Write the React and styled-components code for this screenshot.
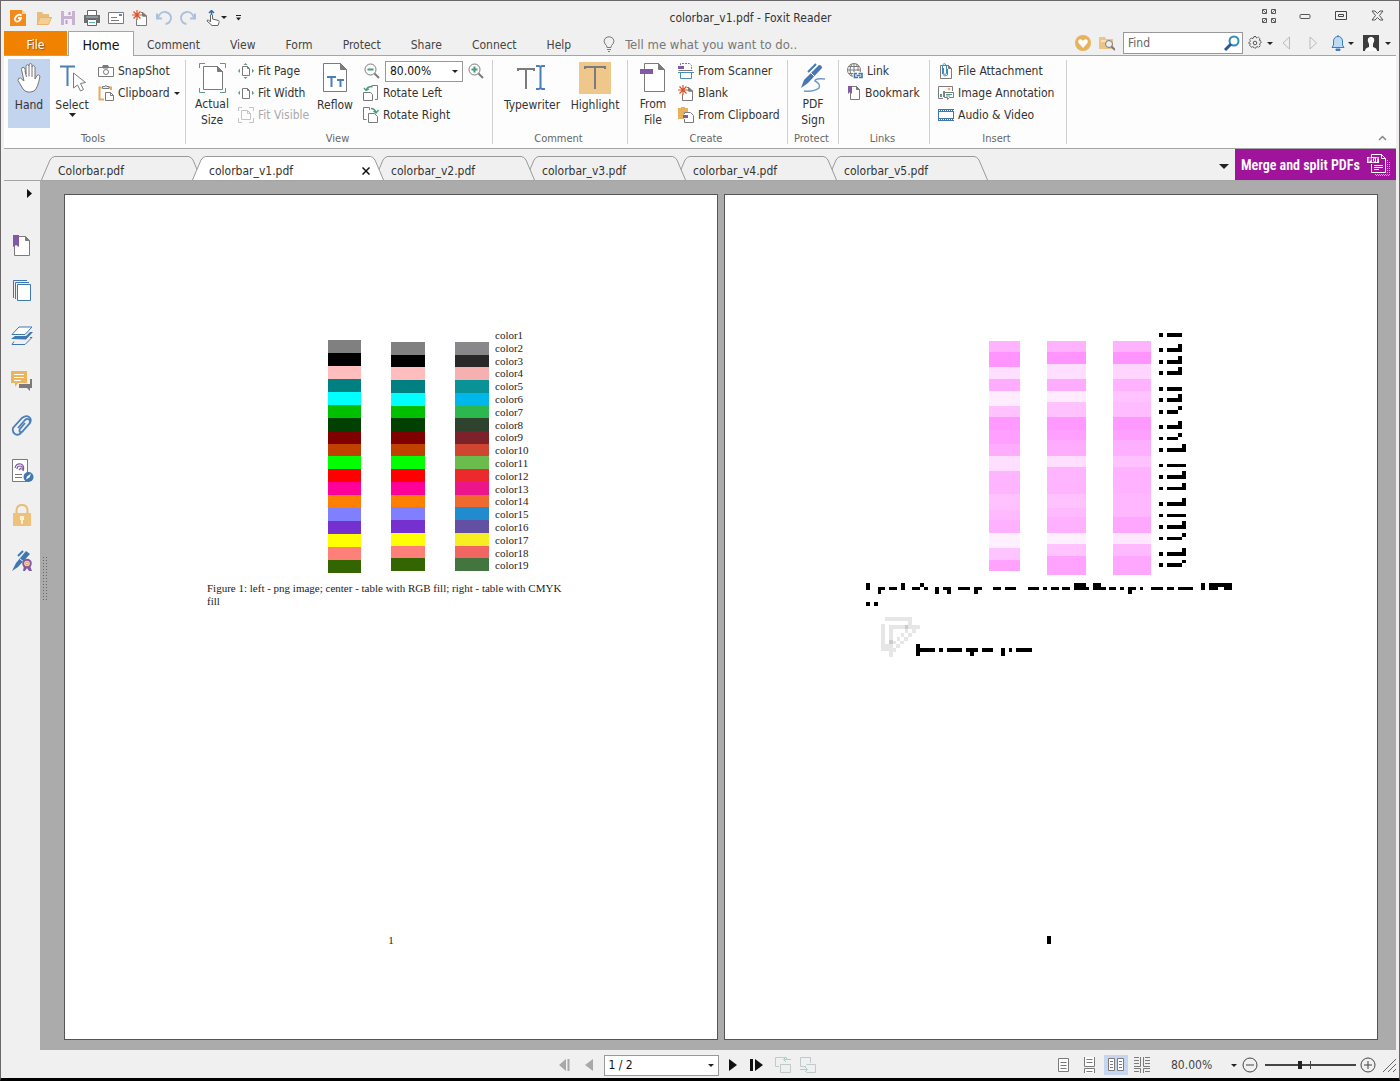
import React from "react";
import styled, {createGlobalStyle} from "styled-components";

const GlobalStyle = createGlobalStyle`
    *{
        box-sizing:border-box;
    }
    body{
        margin:0;
        background-color:#000;
        font-family:"DejaVu Sans Condensed", "DejaVu Sans", sans-serif;
        font-size:12px;
        color:#333;
    }
    button, input, select{
        font:inherit;
        color:inherit;
    }
    button{
        border:0;
        padding:0;
        background:none;
        white-space:nowrap;
    }
    svg{
        display:block;
        flex:none;
    }
`;

const Window = styled.div`
    height:100vh;
    min-height:700px;
    display:flex;
    flex-direction:column;
    background-color:#f0f0f0;
    border:1px solid #6b676b;
    border-bottom:3px solid #000;
`;

const Inner = styled.div`
    flex:1;
    min-height:0;
    margin:0 3px;
    display:flex;
    flex-direction:column;
`;

/* title bar */

const TitleBar = styled.header`
    height:30px;
    display:flex;
    align-items:center;
    padding:3px 10px 0 6px;
`;

const QuickAccess = styled.div`
    display:flex;
    gap:6px;
    align-items:center;
`;

const Logo = styled.span`
    margin-right:3px;
`;

const IconButton = styled.button`
    display:flex;
    align-items:center;
    justify-content:center;
    flex:none;
    width:${props=>props.$width || 18}px;
    height:${props=>props.$height || 20}px;
    background-color:${props=>props.$active ? "#c5d5ef" : "transparent"};
`;

const Title = styled.h1`
    flex:1;
    margin:0;
    font-size:12px;
    font-weight:normal;
    text-align:center;
`;

const WindowButtons = styled.div`
    display:flex;
    gap:18px;
    padding-bottom:4px;
`;

/* ribbon tabs */

const TabBar = styled.nav`
    display:flex;
    height:25px;
    border-bottom:1px solid #a5a5a5;
`;

const FileTab = styled.button`
    width:63px;
    height:24px;
    padding-top:3px;
    margin-right:1px;
    background-color:#f08200;
    color:#fff;
    text-shadow:1px 1px 1px #8a5a20;
`;

const HomeTab = styled.button`
    width:66px;
    height:25px;
    padding-top:2px;
    background-color:#fff;
    border:1px solid #a5a5a5;
    border-bottom:0;
    font-size:14px;
    color:#111;
`;

const RibbonTab = styled.button`
    padding:4px 0 0;
    margin-left:${props=>props.$first ? 13 : 30}px;
    color:#444;
`;

const TellMe = styled.label`
    display:flex;
    align-items:center;
    gap:10px;
    margin-left:32px;
    padding-top:2px;
`;

const TellMeInput = styled.input`
    width:190px;
    padding:0;
    border:0;
    background:none;
    font-size:13px;
    &::placeholder{
        color:#777;
        opacity:1;
    }
`;

const TabTools = styled.div`
    margin-left:auto;
    display:flex;
    align-items:center;
    height:24px;
`;

const FindBox = styled.label`
    display:flex;
    align-items:center;
    justify-content:space-between;
    width:120px;
    height:22px;
    margin:0 4px;
    padding:0 2px 0 4px;
    background-color:#fff;
    border:1px solid #999;
`;

const FindInput = styled.input`
    width:80px;
    padding:0;
    border:0;
    background:none;
    &::placeholder{
        color:#666;
        opacity:1;
    }
`;

/* ribbon */

const Ribbon = styled.div`
    display:flex;
    height:93px;
    background-color:#fdfdfd;
    border-bottom:1px solid #a5a5a5;
`;

const Group = styled.section`
    display:flex;
    flex-direction:column;
    width:${props=>props.$width}px;
    padding:3px 4px 0;
    background:linear-gradient(#d0d0d0, #d0d0d0) right 4px / 1px 84px no-repeat;
`;

const GroupBody = styled.div`
    display:flex;
    gap:${props=>props.$gap || 1}px;
    height:72px;
`;

const GroupTitle = styled.div`
    padding-right:4px;
    font-size:11px;
    line-height:16px;
    text-align:center;
    color:#666;
`;

const BigButton = styled.button`
    display:flex;
    flex-direction:column;
    align-items:center;
    width:${props=>props.$width || 42}px;
    height:69px;
    line-height:16px;
    background-color:${props=>props.$active ? "#c3d4ef" : "transparent"};
`;

const BigIcon = styled.span`
    display:flex;
    align-items:center;
    height:38px;
`;

const BigLabel = styled.span`
    white-space:pre-line;
`;

const Stack = styled.div`
    display:flex;
    flex-direction:column;
    align-items:flex-start;
    padding-top:1px;
    padding-left:${props=>props.$pad || 0}px;
    width:${props=>props.$width || "auto"};
`;

const SmallButton = styled.button`
    display:flex;
    align-items:center;
    gap:4px;
    height:22px;
    &:disabled{
        color:#aaa;
    }
`;

const ZoomRow = styled.div`
    display:flex;
    align-items:center;
    height:22px;
    gap:5px;
`;

const SelectBox = styled.div`
    display:grid;
    align-items:center;
    width:${props=>props.$width}px;
    height:21px;
    background-color:#fff;
    border:1px solid #999;
    > *{
        grid-area:1 / 1;
    }
    > svg{
        justify-self:end;
        margin-right:4px;
        pointer-events:none;
    }
`;

const Select = styled.select`
    appearance:none;
    width:100%;
    height:19px;
    padding:0 4px;
    border:0;
    background:none;
    color:#111;
`;

const Collapse = styled.button`
    margin:auto 9px 3px auto;
    padding:4px 0;
`;

/* document tabs */

const DocTabs = styled.div`
    display:flex;
    align-items:flex-end;
    height:32px;
    padding-left:37px;
    border-bottom:1px solid #a5a5a5;
`;

const DocTabBox = styled.div`
    position:relative;
    z-index:${props=>props.$level};
    display:flex;
    width:${props=>props.$active ? 192 : 161}px;
    height:24px;
    margin-right:-10px;
`;

const DocTabBody = styled.div`
    flex:1;
    display:flex;
    align-items:center;
    justify-content:space-between;
    padding:5px 0 0 3px;
    background-color:${props=>props.$active ? "#fff" : "#f0f0f0"};
    border-top:1px solid #999;
`;

const Promo = styled.a`
    display:flex;
    align-items:center;
    justify-content:space-between;
    align-self:flex-start;
    width:161px;
    height:31px;
    padding:0 6px;
    background-color:#a0149c;
    color:#fff;
    font-family:"Roboto Condensed", "Roboto", sans-serif;
    font-size:14px;
    font-weight:600;
    white-space:nowrap;
    text-decoration:none;
`;

const TabListButton = styled.button`
    align-self:flex-start;
    margin:15px 6px 0 auto;
`;

/* work area */

const Work = styled.main`
    flex:1;
    min-height:0;
    display:flex;
    background-color:#ababab;
`;

const Sidebar = styled.aside`
    width:36px;
    display:flex;
    flex-direction:column;
    align-items:center;
    background-color:#f0f0f0;
`;

const Expand = styled.button`
    align-self:flex-end;
    margin:8px 8px 25px 0;
`;

const SideButton = styled.button`
    display:flex;
    align-items:center;
    justify-content:center;
    width:36px;
    height:45px;
`;

const Gutter = styled.div`
    width:24px;
    padding:375px 0 0 2px;
`;

const Grip = styled.div`
    width:5px;
    height:44px;
    background:radial-gradient(#666 30%, transparent 40%) 0 0 / 3px 3px;
`;

const Pages = styled.div`
    flex:1;
    display:grid;
    grid-template-columns:1fr 1fr;
    gap:6px;
    padding:13px 18px 10px 0;
`;

const Page = styled.article`
    display:flex;
    flex-direction:column;
    align-items:center;
    background-color:#fff;
    border:1px solid #555;
    padding:${props=>props.$preview ? "135px 4px 0 0" : "134px 0 0"};
    color:#222;
    font-family:"Liberation Serif", serif;
    font-size:11px;
    line-height:13px;
`;

const Figure = styled.figure`
    width:368px;
    margin:0;
`;

const Chart = styled.div`
    display:flex;
    gap:30px;
    height:243px;
    padding-left:121px;
`;

const Bar = styled.div`
    display:flex;
    flex-direction:column;
    width:${props=>props.$tall ? 33 : 34}px;
    height:${props=>props.$tall ? 233 : 229}px;
    margin-top:${props=>props.$tall ? 11 : 13}px;
`;

const Swatch = styled.div`
    flex:1;
    background-color:${props=>props.$color};
`;

const Names = styled.ol`
    list-style:none;
    display:flex;
    flex-direction:column;
    height:243px;
    margin:0 0 0 -24px;
    padding:0;
`;

const Name = styled.li`
    flex:1;
    min-height:0;
    line-height:12px;
`;

const Caption = styled.figcaption`
    margin-top:10px;
`;

const PageNumber = styled.div`
    margin-top:${props=>props.$preview ? 279 : 326}px;
`;

/* status bar */

const StatusBar = styled.footer`
    display:grid;
    grid-template-columns:1fr auto 1fr;
    align-items:center;
    height:28px;
    padding-top:2px;
`;

const PageNav = styled.div`
    grid-column:2;
    display:flex;
    align-items:center;
    gap:7px;
    padding-right:28px;
`;

const ViewTools = styled.div`
    display:flex;
    align-items:center;
    justify-content:flex-end;
    gap:2px;
`;

const ZoomButton = styled.button`
    display:flex;
    align-items:center;
    justify-content:space-between;
    width:66px;
    margin:0 2px 0 15px;
    color:#444;
`;

const Slider = styled.input`
    appearance:none;
    width:91px;
    height:12px;
    margin:0 1px 0 4px;
    background:
        linear-gradient(#444, #444) 45px 2px / 1px 8px no-repeat,
        linear-gradient(#444, #444) 0 5px / 100% 2px no-repeat;
    &::-webkit-slider-thumb{
        appearance:none;
        width:4px;
        height:8px;
        background-color:#222;
    }
`;

const Corner = styled.span`
    margin-left:4px;
`;

const Caret = ({size = 7})=>
    <svg width={size} height={Math.ceil(size / 2)} viewBox="0 0 8 4" preserveAspectRatio="none">
        <path d="M0 0h8L4 4z" fill="#222"/>
    </svg>

const Drawing = ({size = 16, width, height, children})=>
    <svg width={width || size} height={height || size} viewBox={`0 0 ${width || size} ${height || size}`} fill="none" stroke="#7b7b7b">
        {children}
    </svg>

const star = "M5 0v10M0 5h10M1.5 1.5l7 7M8.5 1.5l-7 7";

const icons = {
    logo:<Drawing><path d="M0 0h12l4 4v12H0z" fill="#f28a1c" stroke="none"/><path d="M12 0v4h4z" fill="#fbd3a0" stroke="none"/><path d="M11.500 5.500Q10 4 7.500 5.200Q4.500 7 5 10Q6 12.500 9 11Q10.500 10 11 8H8" stroke="#fff" strokeWidth="1.800"/></Drawing>,
    open:<Drawing><path d="M1 15V2h5l1 2h6v4" fill="#e7bd79" stroke="none"/><path d="M1 14.500L4 7.500h11.500l-3 7z" fill="#f3cf94" stroke="#e4b66c"/></Drawing>,
    save:<Drawing size={14}><path d="M0 0h14v14H0z" fill="#c5b3d0" stroke="none"/><path d="M3 0h8v5H3zM3 8h8v6H3z" fill="#f3edf5" stroke="none"/><path d="M8.500 1v3M5.500 9v4" stroke="#b59fc4" strokeWidth="2"/></Drawing>,
    print:<Drawing><path d="M3.500 5V.5h9V5" fill="#fff" stroke="#666"/><path d="M0 5h16v8h-3V9H3v4H0z" fill="#6e6e6e" stroke="none"/><path d="M2 7h12" stroke="#a9c8dc"/><path d="M3.500 9.500h9v6h-9z" fill="#fff" stroke="#666"/><path d="M5 12.500h6" stroke="#5ba"/></Drawing>,
    mail:<Drawing height={12} width={16}><path d="M.5.5h15v11H.5z" fill="#fff"/><path d="M3 5.500h6M3 8.500h8"/><path d="M11 2h3v2h-3z" fill="#5b87b5" stroke="none"/></Drawing>,
    blank:<Drawing><path d="M4.500 9.500v6h10V6l-4-3.500H9M10.500 2.500V6h4" fill="#fff"/><path d="M10.500 2.500V6h4z" fill="#7b7b7b"/><path d={star} stroke="#d9532c" strokeWidth="1.200"/></Drawing>,
    undo:<Drawing><path d="M1 3.500v5h5" stroke="#a9c1da" strokeWidth="2"/><path d="M2 8Q4 1.500 9.500 2Q15 3 15 8.500Q14 13.500 9.500 14" stroke="#a9c1da" strokeWidth="1.800"/></Drawing>,
    redo:<Drawing><path d="M15 3.500v5h-5" stroke="#a9c1da" strokeWidth="2"/><path d="M14 8Q12 1.500 6.500 2Q1 3 1 8.500Q2 13.500 6.500 14" stroke="#a9c1da" strokeWidth="1.800"/></Drawing>,
    touch:<Drawing><path d="M5.500 12V5q1-1.500 2 0v4l6 1.500q1 .5.5 2l-1 3h-6L2 11q0-1.500 1.500-1z" fill="#fff" stroke="#666"/><path d="M6.500 5V1M4 3l2.500-2.500L9 3" stroke="#336fa8" strokeWidth="1.500"/></Drawing>,
    more:<Drawing width={5} height={6}><path d="M0 .5h5" stroke="#222"/><path d="M0 2.500h5L2.500 5.500z" fill="#222" stroke="none"/></Drawing>,
    full:<Drawing size={14}><path d="M.5.5h4v4h-4zM9.500.5h4v4h-4zM.5 9.500h4v4h-4zM9.500 9.500h4v4h-4z" stroke="#555"/><path d="M1 1l3.500 3.500M13 1L9.500 4.500M1 13l3.500-3.500M13 13L9.500 9.500" stroke="#777"/></Drawing>,
    min:<Drawing width={12} height={10}><rect x="1" y="3.500" width="10" height="4" rx="1" stroke="#555"/></Drawing>,
    max:<Drawing width={12} height={10}><path d="M.5.5h11v8H.5z" stroke="#444"/><path d="M3.500 3.500h5v2h-5z" stroke="#444"/></Drawing>,
    close:<Drawing width={13} height={11}><path d="M1 1h3l2.500 2.500L9 1h3L8.500 5.500 12 10H9L6.500 7.500 4 10H1l3.500-4.500z" stroke="#555"/></Drawing>,
    bulb:<Drawing width={12} height={16}><path d="M4 11.500Q4 9 2 8Q0 5 2 2.500Q6-1 10 2.500Q12 5 10 8Q8 9 8 11.500zM4 13.500h4M5 15.500h2"/></Drawing>,
    heart:<Drawing><circle cx="8" cy="8" r="8" fill="#e8b25a" stroke="none"/><path d="M8 13L3.500 8Q2.500 5 5 4.200Q7 4 8 6Q9 4 11 4.200Q13.500 5 12.500 8z" fill="#fff" stroke="none"/></Drawing>,
    folderFind:<Drawing><path d="M0 2h6l1 2h7v10H0z" fill="#edc487" stroke="none"/><path d="M2 6h5" stroke="#fff"/><circle cx="10" cy="9" r="3.500" fill="#eee"/><path d="M12.500 11.500L16 15" strokeWidth="2"/></Drawing>,
    find:<Drawing><circle cx="10" cy="6" r="4.500" stroke="#318bb8" strokeWidth="2"/><path d="M7 9l-6 6" stroke="#2b55a0" strokeWidth="3"/></Drawing>,
    gear:<Drawing><path d="M7 1.500h2l.5 1.500 2-.8 1.500 1.400-.8 1.900 1.800.5v2l-1.500.8.7 2-1.400 1.400-2-.7-.8 1.500H7l-.8-1.500-2 .7-1.400-1.400.7-2L2 9V7l1.500-.7-.8-1.900 1.500-1.400 2 .7z" stroke="#555" strokeDasharray="2 .5"/><circle cx="8" cy="8" r="1.800" stroke="#555"/></Drawing>,
    prev:<Drawing width={9} height={14}><path d="M7.500 1v12L1 7z" stroke="#bbb"/></Drawing>,
    next:<Drawing width={9} height={14}><path d="M1 1v12l6.500-6z" stroke="#bbb"/></Drawing>,
    bell:<Drawing width={14} height={16}><path d="M1 12.500L2.500 10V6Q3 1.500 7 1.500T11.500 6v4l1.500 2.500z" fill="#bcdcf5" stroke="#3f7dbb"/><path d="M5 14h4v1.500H5zM7 0v2" fill="#3f7dbb" stroke="#3f7dbb"/></Drawing>,
    user:<Drawing><path d="M0 0h16v16H0z" fill="#3d3d3d" stroke="none"/><path d="M2 16q0-3 4-4V9Q4 6 5 3.500Q8 0 11 3.500Q12 6 10 9v3q4 1 4 4z" fill="#fff" stroke="none"/></Drawing>,
    hand:<Drawing width={24} height={30}><path d="M7 18L4.500 6.500q0-2 1.500-2.200T8 6l1 5V3.500q.2-1.800 1.500-1.800T12 3V2q.3-1.500 1.500-1.500T15 2v2q.2-1.300 1.500-1.300T18 4.500V16l2-3.500q1.500-1.500 3 .5Q21 25 17 28q-7 3-11-2L1 17.500q0-3 2.500-2.500L7 18z" fill="#fff" stroke="#777"/><path d="M8 8l1.500 6M12 3v10.500M15 4v10" stroke="#777"/></Drawing>,
    select:<Drawing width={28} height={30}><path d="M2 3.500h15M9.500 3v20" stroke="#4b7fb5" strokeWidth="2"/><path d="M15.500 10v15l4-3 3 6 3-1.500-3-6 5-1z" fill="#fff"/></Drawing>,
    camera:<Drawing width={16} height={12}><path d="M.5 2.500H5V.5h5v2h5.500v9H.5z" fill="#fff"/><path d="M5 1h5v2H5z" fill="#7b7b7b"/><circle cx="8" cy="7" r="2.500"/></Drawing>,
    clipboard:<Drawing><path d="M6 14.500H1.500v-12h2M11 2.500h2V5" stroke="#e8a95b" strokeWidth="2"/><path d="M4.500 3.500v-2H7q0-2 2 0h2v2z" fill="#eee"/><path d="M7.500 7.500h5l3 3v5h-8zM12.500 7.500v3h3" fill="#fff"/></Drawing>,
    actual:<Drawing width={27} height={30}><path d="M.5 5V.5H6M21 .5h5.500V5M.5 25v4.500H6M21 29.500h5.500V25" stroke="#5a9c85"/><path d="M4.500 3.500h14l5 5v18h-19z" fill="#fff"/><path d="M18.500 3.500v5h5z" fill="#7b7b7b"/></Drawing>,
    fitPage:<Drawing><path d="M4.500 3.500h5l2 2v7h-7zM9.500 3.500v2h2" fill="#fff"/><path d="M5.500 2L7.500 0l2 2zM5.500 14l2 2 2-2zM2 5.500L0 8l2 2zM14 5.500L16 8l-2 2z" fill="#5a9c85" stroke="none"/></Drawing>,
    fitWidth:<Drawing><path d="M4.500 3.500h5l2 2v8h-7zM9.500 3.500v2h2" fill="#fff"/><path d="M2 5.500L0 8l2 2zM14 5.500L16 8l-2 2z" fill="#5a9c85" stroke="none"/></Drawing>,
    fitVisible:<Drawing><path d="M.5 4V.5H4M11 .5h4.500V4M.5 11v4.500H4M11 15.500h4.500V11M3.500 3.500h6l3 3v6h-9zM9.500 3.500v3h3" stroke="#c4c4c4"/></Drawing>,
    reflow:<Drawing width={24} height={30}><path d="M.5.5h17l6 6v22H.5z" fill="#fff"/><path d="M17.500.5v6h6z" fill="#7b7b7b"/><path d="M4 14h9M8.500 14v10M14 17h7M17.500 17v7" stroke="#4b7fb5" strokeWidth="2"/></Drawing>,
    zoomOut:<Drawing><circle cx="6.500" cy="6.500" r="5.500"/><path d="M10.500 10.500L15 15" strokeWidth="2"/><path d="M3.500 6.500h6" stroke="#4c9b80" strokeWidth="2"/></Drawing>,
    zoomIn:<Drawing><circle cx="6.500" cy="6.500" r="5.500"/><path d="M10.500 10.500L15 15" strokeWidth="2"/><path d="M3.500 6.500h6M6.500 3.500v6" stroke="#4c9b80" strokeWidth="2"/></Drawing>,
    rotateLeft:<Drawing><path d="M9 2.500V.5h5.500v14H12M.5 7.500h7l2 2v6h-9z" fill="#fff"/><path d="M3 5.500Q4 1.500 9 1.500M1 3l2 2.500L6 4" stroke="#4c9b80" strokeWidth="1.300"/></Drawing>,
    rotateRight:<Drawing><path d="M3.500 12.500h-3v-12h6V3M5.500 6.500h6l3 3v6h-9z" fill="#fff"/><path d="M8 1.500Q12 1.500 13 6M10.500 4L13 6l2.500-3" stroke="#4c9b80" strokeWidth="1.300"/></Drawing>,
    typewriter:<Drawing width={30} height={28}><path d="M1 7V5h16v2M9 5v20" strokeWidth="2"/><path d="M19 2h3l1.500 1L25 2h3M23.500 2v23M19 25h3l1.500-1 1.500 1h3" stroke="#4b7fb5" strokeWidth="2"/></Drawing>,
    highlight:<Drawing width={32} height={32}><path d="M0 0h32v32H0z" fill="#efc78a" stroke="none"/><path d="M6 7V5h20v2M16 5v22" strokeWidth="2"/></Drawing>,
    fromFile:<Drawing width={26} height={30}><path d="M4.500.5h14l6 6v22h-20z" fill="#fff"/><path d="M18.500.5v6h6z" fill="#7b7b7b"/><path d="M0 6h13v5H0z" fill="#8358a4" stroke="none"/></Drawing>,
    scanner:<Drawing><path d="M2.500 2V.5h9l2 2V6" strokeDasharray="2 1"/><path d="M0 3h6v3H0z" fill="#8358a4" stroke="none"/><path d="M.5 7.500h14"/><path d="M2.500 10v5.500h11V10M0 9.500h16" stroke="#4b8fb0"/></Drawing>,
    fromClipboard:<Drawing><path d="M0 1h3V0h4v1h3v4H6v7H0z" fill="#e8b25a" stroke="none"/><path d="M6.500 7V5.500h6l3 3v7h-9V12" fill="#fff"/><path d="M5 8h5v3H5z" fill="#8358a4" stroke="none"/></Drawing>,
    sign:<Drawing width={26} height={30}><path d="M19 2q3 0 3 3L8 20l-7 5 3-8z" fill="#4478ae" stroke="none"/><path d="M8 9l8-8" stroke="#4478ae" strokeWidth="2"/><path d="M11 10l4 4" stroke="#fff"/><path d="M25 16Q15 15 15 18Q21 21 19 25Q14 29 4 28" stroke="#6b9bc7" strokeWidth="1.500"/></Drawing>,
    link:<Drawing><circle cx="7" cy="7" r="6.500"/><path d="M.5 7h13M7 .5v13M2 3.500h10M2 10.500h6M5 1Q1 7 5 13M9 1q3 3 2 7"/><path d="M6 9h10v7H6z" fill="#fdfdfd" stroke="none"/><path d="M10 10.500H7.500v4H11M12 14.500h3v-4H11.500M9.500 12.500h4" stroke="#3f78b0" strokeWidth="1.600"/></Drawing>,
    bookmark:<Drawing width={14} height={16}><path d="M3.500 1.500h6l3 3v10h-9z" fill="#fff"/><path d="M9.500 1.500v3h3z" fill="#7b7b7b"/><path d="M1 1h4v8L3 7 1 9z" fill="#8358a4" stroke="none"/></Drawing>,
    attach:<Drawing><path d="M2.500 2.500h8l3 3v10h-11z" fill="#fff"/><path d="M10.500 2.500v3h3z" fill="#7b7b7b"/><path d="M5.500 5v5.500q1.500 2 3 0V3Q7-1 4.500 2v9q2 3.500 5 1V6" stroke="#3f88c0"/></Drawing>,
    image:<Drawing><path d="M5 13.500H.5v-12h14V6"/><path d="M2 12V9h2v3zM5 12V6h2v6z" fill="#5a9c85" stroke="none"/><circle cx="11" cy="4" r="1.300" fill="#e8b25a" stroke="none"/><path d="M6.500 7.500h9v5h-4l-2 2v-2h-3z" fill="#fff"/><path d="M8 9.500h6M8 11h4" stroke="#5a9c85"/></Drawing>,
    video:<Drawing><path d="M.5 2.500h15v11H.5z" fill="#fff" stroke="#3f78b0"/><path d="M0 3.500h16M0 12.500h16" stroke="#3f78b0" strokeWidth="3"/><path d="M1 3.500h15M1 12.500h15" stroke="#fff" strokeDasharray="1 1"/></Drawing>,
    up:<Drawing width={9} height={6}><path d="M1 5l3.500-3.500L8 5" stroke="#888" strokeWidth="1.500"/></Drawing>,
    cross:<Drawing size={8}><path d="M.5.5l7 7M7.500.5l-7 7" stroke="#111" strokeWidth="1.500"/></Drawing>,
    pdfs:<Drawing width={23} height={22}><path d="M4.500 4V.5h10l4 4v14h-14V10M14.500.5v4h4" stroke="#fff"/><path d="M0 3h12v6H0z" fill="#fff" stroke="none"/><path d="M2 8V4h2v2H2M5.500 4v4h1l1-1V5l-1-1M9.500 8V4h2M9.500 6h1" stroke="#a0149c"/><path d="M7 11.500h9M7 13.500h9M7 15.500h5" stroke="#fff"/><path d="M20.500 6v14.500H7M22.500 8v13.500H9" stroke="#df9edd" strokeDasharray="1 1"/></Drawing>,
    right:<Drawing width={5} height={9}><path d="M0 0l5 4.500L0 9z" fill="#111" stroke="none"/></Drawing>,
    sideBookmark:<Drawing width={18} height={22}><path d="M1.500 1.500h11l4 4v15h-15z" fill="#fff"/><path d="M12.500 1.500v4h4z" fill="#7b7b7b"/><path d="M0 0h6v12l-3-2-3 2z" fill="#8358a4" stroke="none"/></Drawing>,
    pages:<Drawing width={20} height={22}><path d="M1.500 18V.5H15M3.500 19V2.500H17" stroke="#3f78b0"/><path d="M5.500 4.500h13v16h-13z" fill="#fff" stroke="#3f78b0"/></Drawing>,
    layers:<Drawing width={22} height={20}><path d="M1 8.500L8 1h13l-7 7.500z" fill="#fff" stroke="#3f78b0"/><path d="M0 13l4-3h11l4-4h3l-7 7.500z" fill="#3f78b0" stroke="none"/><path d="M3 15.500L1 18.500h13l7-7h-2" stroke="#3f78b0"/></Drawing>,
    comments:<Drawing width={22} height={20}><path d="M19 8h2v9h-2v3l-3-3H8v-4h11z" fill="#7b7b7b" stroke="none"/><path d="M0 0h16v12H7l-3 4v-4H0z" fill="#eeb45c" stroke="none"/><path d="M3 3.500h10M3 6.500h10M3 9.500h7" stroke="#fff"/></Drawing>,
    clip:<Drawing size={22}><path d="M7 13l7-8q2-2 4-.5T18 9l-8 9q-3 3-6 1t-2-6l9-10q4-3 7-1t1 6l-7 8q-2 2-3 1t0-3l5-6" stroke="#4a80bb" strokeWidth="1.800"/></Drawing>,
    signDoc:<Drawing width={23} height={24}><path d="M1.500.5h15v22h-15z" fill="#fff"/><path d="M4 9Q5 4 10 5q4 2 2 7M6 10q0-3 3-3t2 4M8 11l2-2" stroke="#8358a4" strokeWidth="1.200"/><path d="M4 15.500h7M4 18.500h7"/><circle cx="17.500" cy="18" r="5" fill="#3f78b0" stroke="none"/><path d="M15 20.500l1-3 4-3-1.500 4z" fill="#fff" stroke="none"/></Drawing>,
    lock:<Drawing width={20} height={23}><path d="M4.500 10V6Q5 1 10 1t5.500 5v4" stroke="#e8bd75" strokeWidth="2"/><path d="M1 9h18v13H1z" fill="#eec27a" stroke="none"/><path d="M8 12h4v4h-1v4H9v-4H8z" fill="#fbf0dd" stroke="none"/></Drawing>,
    certify:<Drawing size={22}><path d="M15 1l4 3L7 17l-6 4 4-8z" fill="#3f78b0" stroke="none"/><path d="M7 6l5-5" stroke="#3f78b0" strokeWidth="2"/><path d="M9 9l4 3" stroke="#f0f0f0"/><path d="M13 16l-1 5h2l2-3 2 3h3l-2-5z" fill="#8358a4" stroke="none"/><circle cx="16" cy="13.500" r="3.800" fill="#fbe3c0" stroke="#8358a4" strokeWidth="2"/><circle cx="16" cy="13.500" r="1.500" stroke="#e39b45"/></Drawing>,
    first:<Drawing width={14} height={12}><path d="M8 0v12L1 6zM9.500 0h2v12h-2z" fill="#a8a8a8" stroke="none"/></Drawing>,
    back:<Drawing width={8} height={12}><path d="M8 0v12L0 6z" fill="#a8a8a8" stroke="none"/></Drawing>,
    forward:<Drawing width={8} height={12}><path d="M0 0v12l8-6z" fill="#111" stroke="none"/></Drawing>,
    last:<Drawing width={13} height={12}><path d="M0 0h3v12H0zM5 0v12l8-6z" fill="#111" stroke="none"/></Drawing>,
    prevView:<Drawing><path d="M4 9.500H.5v-9h11V3M5.500 7.500h10v8h-10z" stroke="#bfcac9"/><path d="M16 2.500H9M11 0L8.500 2.500 11 5" stroke="#a6cfc8"/></Drawing>,
    nextView:<Drawing><path d="M6 9.500H.5v-9h10V6M6.500 7.500h9v8h-9" stroke="#bfcac9"/><path d="M0 12.500h7M5 10l2.500 2.500L5 15" stroke="#a6cfc8"/></Drawing>,
    single:<Drawing width={12} height={15}><path d="M.5.5h10v13H.5z" fill="#fff"/><path d="M2.500 4.500h6M2.500 7.500h6M2.500 10.500h6"/></Drawing>,
    scroll:<Drawing width={12} height={16}><path d="M.5 0v9.500h10V0M.5 16v-4.500h10V16" fill="#fff"/><path d="M2.500 2.500h6M2.500 5.500h6M2.500 14.500h6"/></Drawing>,
    facing:<Drawing width={16} height={14}><path d="M.5.5h6v12h-6zM9.500.5h6v12h-6z" fill="#fff"/><path d="M2 3.500h3M2 6.500h3M2 9.500h3M11 3.500h3M11 6.500h3M11 9.500h3"/></Drawing>,
    facingScroll:<Drawing><path d="M6.500 0v9.500H0M9.500 0v9.500H16M6.500 16v-4.500H0M9.500 16v-4.500H16"/><path d="M0 .5h5M0 3.500h5M0 6.500h5M11 .5h5M11 3.500h5M11 6.500h5M0 14.500h5M11 14.500h5"/></Drawing>,
    minus:<Drawing><circle cx="8" cy="8" r="7" stroke="#444"/><path d="M4 8h8" stroke="#444"/></Drawing>,
    plus:<Drawing><circle cx="8" cy="8" r="7" stroke="#444"/><path d="M4 8h8M8 4v8" stroke="#444"/></Drawing>,
    resize:<Drawing size={13}><path d="M0 13L13 0M5 13l8-8M10 13l3-3" stroke="#666"/></Drawing>
};

const quick = ["open", "save", "print", "mail", "blank", "undo", "redo"];

const menu = ["Comment", "View", "Form", "Protect", "Share", "Connect", "Help"];

const docs = ["Colorbar.pdf", "colorbar_v1.pdf", "colorbar_v2.pdf", "colorbar_v3.pdf", "colorbar_v4.pdf", "colorbar_v5.pdf"];

const side = [
    ["sideBookmark", "Bookmarks"],
    ["pages", "Page thumbnails"],
    ["layers", "Layers"],
    ["comments", "Comments"],
    ["clip", "Attachments"],
    ["signDoc", "Signatures"],
    ["lock", "Security"],
    ["certify", "Digital signatures"]
];

const rgb = ["#808080", "#000", "#ffbdbd", "#008080", "#00ffff", "#00c000", "#004000", "#800000", "#c04000", "#00ff00", "#ff0000", "#ff0099", "#ff8000", "#8080ff", "#7730d0", "#ffff00", "#ff8078", "#336600"];

const cmyk = ["#88888a", "#282828", "#f7b0b0", "#0a9396", "#00b7eb", "#2db84f", "#2d432d", "#7d212b", "#d04530", "#6abd4c", "#ec2a2d", "#ec1589", "#f06a30", "#208ccf", "#6350a2", "#f6ee20", "#f16662", "#43753f"];

// coarse preview bars: left, width, then [bottom edge, color] from top to bottom
const previewBars = [
    [417, 93, [[96, "#ffb3ff"], [141, "#ff94ff"], [177, "#ffdeff"], [213, "#ffabff"], [258, "#ffecff"], [291, "#ffc2ff"], [330, "#ff98ff"], [372, "#ff9fff"], [408, "#ffacff"], [453, "#ffdeff"], [522, "#ffb4ff"], [570, "#ffc2ff"], [600, "#ffbaff"], [639, "#ffb0ff"], [684, "#fff0ff"], [720, "#ffc4ff"], [753, "#ffa3ff"]]],
    [591, 117, [[96, "#ffb3ff"], [132, "#ff94ff"], [177, "#ffdeff"], [213, "#ffabff"], [246, "#ffecff"], [291, "#ffc2ff"], [330, "#ff98ff"], [360, "#ff9fff"], [408, "#ffacff"], [441, "#ffdeff"], [522, "#ffb4ff"], [564, "#ffc2ff"], [591, "#ffbaff"], [639, "#ffb0ff"], [672, "#fff0ff"], [708, "#ffc4ff"], [765, "#ffa3ff"]]],
    [789, 114, [[96, "#ffb3ff"], [132, "#ff94ff"], [177, "#ffd4ff"], [213, "#ffb3ff"], [246, "#ffc4ff"], [291, "#ffbcff"], [330, "#ff98ff"], [360, "#ff9fff"], [408, "#ffafff"], [441, "#ffc2ff"], [519, "#ffb2ff"], [591, "#ffb8ff"], [639, "#ffa6ff"], [672, "#ffe8ff"], [708, "#ffbaff"], [765, "#ffa6ff"]]]
];

// top, height, bar end, tick top (0 for a flat row), shortened bar
const previewNames = [
    [39, 12, 996, 0], [84, 12, 996, 72], [120, 12, 996, 108], [153, 12, 996, 141], [201, 12, 996, 0],
    [234, 12, 996, 222], [270, 12, 996, 258, 1], [315, 12, 996, 303], [351, 9, 996, 339, 1], [384, 12, 1008, 372],
    [432, 9, 1008, 0], [465, 12, 1008, 453], [501, 9, 1008, 489], [546, 12, 1008, 534], [582, 9, 1008, 0],
    [615, 12, 1008, 603], [651, 9, 1008, 639, 1], [696, 12, 1008, 684], [729, 12, 1008, 720, 1]
];

const captionMarks = "M48 789h12v21h-12zM84 801h21v9h-12v12h-9zM117 801h24v9h-24zM153 789h12v21h-12zM186 801h24v9h-24zM210 789h12v12h-12zM222 801h12v9h-12zM255 801h12v21h-12zM279 801h24v21h-12v-12h-12zM324 801h36v9h-36zM372 801h24v9h-12v12h-12zM429 801h24v9h-24zM465 801h33v9h-33zM534 801h33v9h-33zM579 801h12v9h-12zM603 801h24v9h-24zM636 801h24v9h-24zM672 789h36v12h9v9h-45zM729 789h24v12h15v9h-39zM777 801h21v9h-21zM810 801h12v9h-12zM834 801h24v9h-12v12h-12zM870 801h9v9h-9zM903 801h36v9h-36zM951 801h21v9h-21zM984 801h45v9h-45zM1053 789h12v21h-12zM1077 789h69v21h-24v-9h-18v9h-27zM48 846h12v12h-12zM72 846h12v12h-12z";

const footMarks = "M198 972h12v12h45v12h-45v12h-12zM267 984h12v12h-12zM291 984h45v12h-45zM348 984h36v12h-12v12h-12v-12h-12zM396 984h33v12h-33zM453 984h12v24h-12zM477 984h9v12h-9zM498 984h48v12h-48z";

const Preview = ()=>
    <svg width="366" height="327" viewBox="48 30 1098 981" shapeRendering="crispEdges" role="img" aria-label="Page 2 preview">
        {previewBars.map(([x, width, parts])=>parts.map(([end, fill], i)=>{
            const y = i ? parts[i - 1][0] : 63;
            return <rect key={`${x}-${end}`} x={x} y={y} width={width} height={end - y} fill={fill}/>;
        }))}
        {previewNames.map(([y, h, end, tick, short])=>
            <g key={y}>
                <rect x="927" y={y} width="12" height={h}/>
                <rect x="951" y={y} width={end - 951 - (short ? 12 : 0)} height={h}/>
                {tick > 0 && <rect x={end - 12} y={tick} width="12" height={y - tick + (short ? 0 : h)}/>}
            </g>
        )}
        <path d={captionMarks}/>
        <path d="M105 891h81v24h24v12h-12v12h-12v12h-12v12h-12v9h-12v12h-12v12h-9v20h-12v-23h-24v-81h12z" fill="#e6e6e6"/>
        <path d="M105 903h69v12h-57v57h-12zM129 927h36v12h-12v12h-12v12h-12zM174 927h12v12h-12zM162 939h12v12h-12zM150 951h12v12h-12zM138 963h12v9h-12zM129 972h9v12h-9z" fill="#fff"/>
        <path d="M165 915h9v12h-9zM117 960h12v12h-12z" fill="#ccc"/>
        <path d={footMarks}/>
    </svg>

const Big = ({icon, label, width, active, caret})=>
    <BigButton $width={width} $active={active}>
        <BigIcon>{icons[icon]}</BigIcon>
        <BigLabel>{label}</BigLabel>
        {caret && <Caret/>}
    </BigButton>

const Small = ({icon, label, disabled, caret})=>
    <SmallButton disabled={disabled}>
        {icons[icon]}
        {label}
        {caret && <Caret size={6}/>}
    </SmallButton>

const DocTab = ({name, active, level})=>{
    const fill = active ? "#fff" : "#f0f0f0";
    return (
        <DocTabBox $active={active} $level={level}>
            <svg width="14" height="24" viewBox="0 0 14 24" fill={fill}>
                <path d="M.5 24L9 4Q11 .5 14 .5V24" stroke="#999"/>
                <path d="M13 1h2v24h-2z"/>
            </svg>
            <DocTabBody $active={active}>
                <span>{name}</span>
                {active && <IconButton $width={8} $height={12} aria-label="Close tab">{icons.cross}</IconButton>}
            </DocTabBody>
            <svg width="14" height="24" viewBox="0 0 14 24" fill={fill}>
                <path d="M13.500 24L5 4Q3 .5 0 .5V24" stroke="#999"/>
                <path d="M-1 1h2v24h-2z"/>
            </svg>
        </DocTabBox>
    );
}

const ColorBar = ({colors, tall})=>
    <Bar $tall={tall}>
        {colors.map((color)=><Swatch key={color} $color={color}/>)}
    </Bar>

const App = ()=>
    <Window>
        <GlobalStyle/>
        <Inner>
            <TitleBar>
                <QuickAccess>
                    <Logo>{icons.logo}</Logo>
                    {quick.map(name=><IconButton key={name} aria-label={name}>{icons[name]}</IconButton>)}
                    <IconButton $width={26} aria-label="Touch mode">{icons.touch}<Caret size={6}/></IconButton>
                    <IconButton $width={6} aria-label="Customize">{icons.more}</IconButton>
                </QuickAccess>
                <Title>colorbar_v1.pdf - Foxit Reader</Title>
                <WindowButtons>
                    <IconButton aria-label="Full screen">{icons.full}</IconButton>
                    <IconButton aria-label="Minimize">{icons.min}</IconButton>
                    <IconButton aria-label="Maximize">{icons.max}</IconButton>
                    <IconButton aria-label="Close">{icons.close}</IconButton>
                </WindowButtons>
            </TitleBar>
            <TabBar>
                <FileTab>File</FileTab>
                <HomeTab>Home</HomeTab>
                {menu.map((name, i)=><RibbonTab key={name} $first={i === 0}>{name}</RibbonTab>)}
                <TellMe>
                    {icons.bulb}
                    <TellMeInput placeholder="Tell me what you want to do.." aria-label="Tell me what you want to do"/>
                </TellMe>
                <TabTools>
                    <IconButton $width={24} aria-label="Favorites">{icons.heart}</IconButton>
                    <IconButton $width={24} aria-label="Search folder">{icons.folderFind}</IconButton>
                    <FindBox>
                        <FindInput placeholder="Find" aria-label="Find"/>
                        {icons.find}
                    </FindBox>
                    <IconButton $width={26} aria-label="Settings">{icons.gear}&nbsp;<Caret size={6}/></IconButton>
                    <IconButton $width={27} aria-label="Previous result">{icons.prev}</IconButton>
                    <IconButton $width={27} aria-label="Next result">{icons.next}</IconButton>
                    <IconButton $width={31} aria-label="Notifications">{icons.bell}&nbsp;<Caret size={6}/></IconButton>
                    <IconButton $width={38} aria-label="Account">{icons.user}&nbsp;&nbsp;<Caret size={6}/></IconButton>
                </TabTools>
            </TabBar>
            <Ribbon>
                <Group $width={182}>
                    <GroupBody>
                        <Big icon="hand" label="Hand" active/>
                        <Big icon="select" label="Select" caret/>
                        <Stack $pad={4}>
                            <Small icon="camera" label="SnapShot"/>
                            <Small icon="clipboard" label="Clipboard" caret/>
                        </Stack>
                    </GroupBody>
                    <GroupTitle>Tools</GroupTitle>
                </Group>
                <Group $width={307}>
                    <GroupBody $gap={4}>
                        <Big icon="actual" label={"Actual\nSize"} width={44}/>
                        <Stack $width="72px">
                            <Small icon="fitPage" label="Fit Page"/>
                            <Small icon="fitWidth" label="Fit Width"/>
                            <Small icon="fitVisible" label="Fit Visible" disabled/>
                        </Stack>
                        <Big icon="reflow" label="Reflow"/>
                        <Stack $pad={3}>
                            <ZoomRow>
                                <IconButton $width={17} aria-label="Zoom out">{icons.zoomOut}</IconButton>
                                <SelectBox $width={78}>
                                    <Select aria-label="Zoom"><option>80.00%</option></Select>
                                    <Caret size={6}/>
                                </SelectBox>
                                <IconButton $width={16} aria-label="Zoom in">{icons.zoomIn}</IconButton>
                            </ZoomRow>
                            <Small icon="rotateLeft" label="Rotate Left"/>
                            <Small icon="rotateRight" label="Rotate Right"/>
                        </Stack>
                    </GroupBody>
                    <GroupTitle>View</GroupTitle>
                </Group>
                <Group $width={135}>
                    <GroupBody>
                        <Big icon="typewriter" label="Typewriter" width={70}/>
                        <Big icon="highlight" label="Highlight" width={54}/>
                    </GroupBody>
                    <GroupTitle>Comment</GroupTitle>
                </Group>
                <Group $width={160}>
                    <GroupBody>
                        <Big icon="fromFile" label={"From\nFile"}/>
                        <Stack $pad={3}>
                            <Small icon="scanner" label="From Scanner"/>
                            <Small icon="blank" label="Blank"/>
                            <Small icon="fromClipboard" label="From Clipboard"/>
                        </Stack>
                    </GroupBody>
                    <GroupTitle>Create</GroupTitle>
                </Group>
                <Group $width={51}>
                    <GroupBody>
                        <Big icon="sign" label={"PDF\nSign"}/>
                    </GroupBody>
                    <GroupTitle>Protect</GroupTitle>
                </Group>
                <Group $width={91}>
                    <GroupBody>
                        <Stack $pad={4}>
                            <Small icon="link" label="Link"/>
                            <Small icon="bookmark" label="Bookmark"/>
                        </Stack>
                    </GroupBody>
                    <GroupTitle>Links</GroupTitle>
                </Group>
                <Group $width={137}>
                    <GroupBody>
                        <Stack $pad={4}>
                            <Small icon="attach" label="File Attachment"/>
                            <Small icon="image" label="Image Annotation"/>
                            <Small icon="video" label="Audio & Video"/>
                        </Stack>
                    </GroupBody>
                    <GroupTitle>Insert</GroupTitle>
                </Group>
                <Collapse aria-label="Collapse ribbon">{icons.up}</Collapse>
            </Ribbon>
            <DocTabs>
                {docs.map((name, i)=><DocTab key={name} name={name} active={i === 1} level={i === 1 ? 10 : 9 - i}/>)}
                <TabListButton aria-label="List tabs"><Caret size={10}/></TabListButton>
                <Promo href="#">Merge and split PDFs{icons.pdfs}</Promo>
            </DocTabs>
            <Work>
                <Sidebar>
                    <Expand aria-label="Expand panel">{icons.right}</Expand>
                    {side.map(([icon, label])=><SideButton key={icon} aria-label={label}>{icons[icon]}</SideButton>)}
                </Sidebar>
                <Gutter><Grip/></Gutter>
                <Pages>
                    <Page>
                        <Figure>
                            <Chart>
                                <ColorBar colors={rgb} tall/>
                                <ColorBar colors={rgb}/>
                                <ColorBar colors={cmyk}/>
                                <Names>
                                    {Array.from({length:19}, (_, i)=><Name key={i}>color{i + 1}</Name>)}
                                </Names>
                            </Chart>
                            <Caption>Figure 1: left - png image; center - table with RGB fill; right - table with CMYK fill</Caption>
                        </Figure>
                        <PageNumber>1</PageNumber>
                    </Page>
                    <Page $preview>
                        <Preview/>
                        <PageNumber $preview>
                            <svg width="4" height="8"><rect width="4" height="8"/></svg>
                        </PageNumber>
                    </Page>
                </Pages>
            </Work>
            <StatusBar>
                <PageNav>
                    <IconButton aria-label="First page">{icons.first}</IconButton>
                    <IconButton $width={16} aria-label="Previous page">{icons.back}</IconButton>
                    <SelectBox $width={115}>
                        <Select aria-label="Page"><option>1 / 2</option></Select>
                        <Caret size={6}/>
                    </SelectBox>
                    <IconButton $width={14} aria-label="Next page">{icons.forward}</IconButton>
                    <IconButton $width={20} aria-label="Last page">{icons.last}</IconButton>
                    <IconButton aria-label="Previous view">{icons.prevView}</IconButton>
                    <IconButton aria-label="Next view">{icons.nextView}</IconButton>
                </PageNav>
                <ViewTools>
                    <IconButton $width={24} aria-label="Single page">{icons.single}</IconButton>
                    <IconButton $width={24} aria-label="Continuous">{icons.scroll}</IconButton>
                    <IconButton $width={24} $active aria-label="Facing">{icons.facing}</IconButton>
                    <IconButton $width={24} aria-label="Continuous facing">{icons.facingScroll}</IconButton>
                    <ZoomButton>80.00%<Caret size={6}/></ZoomButton>
                    <IconButton aria-label="Decrease zoom">{icons.minus}</IconButton>
                    <Slider type="range" min="0" max="100" defaultValue="38" aria-label="Zoom level"/>
                    <IconButton aria-label="Increase zoom">{icons.plus}</IconButton>
                    <Corner>{icons.resize}</Corner>
                </ViewTools>
            </StatusBar>
        </Inner>
    </Window>

export default App
